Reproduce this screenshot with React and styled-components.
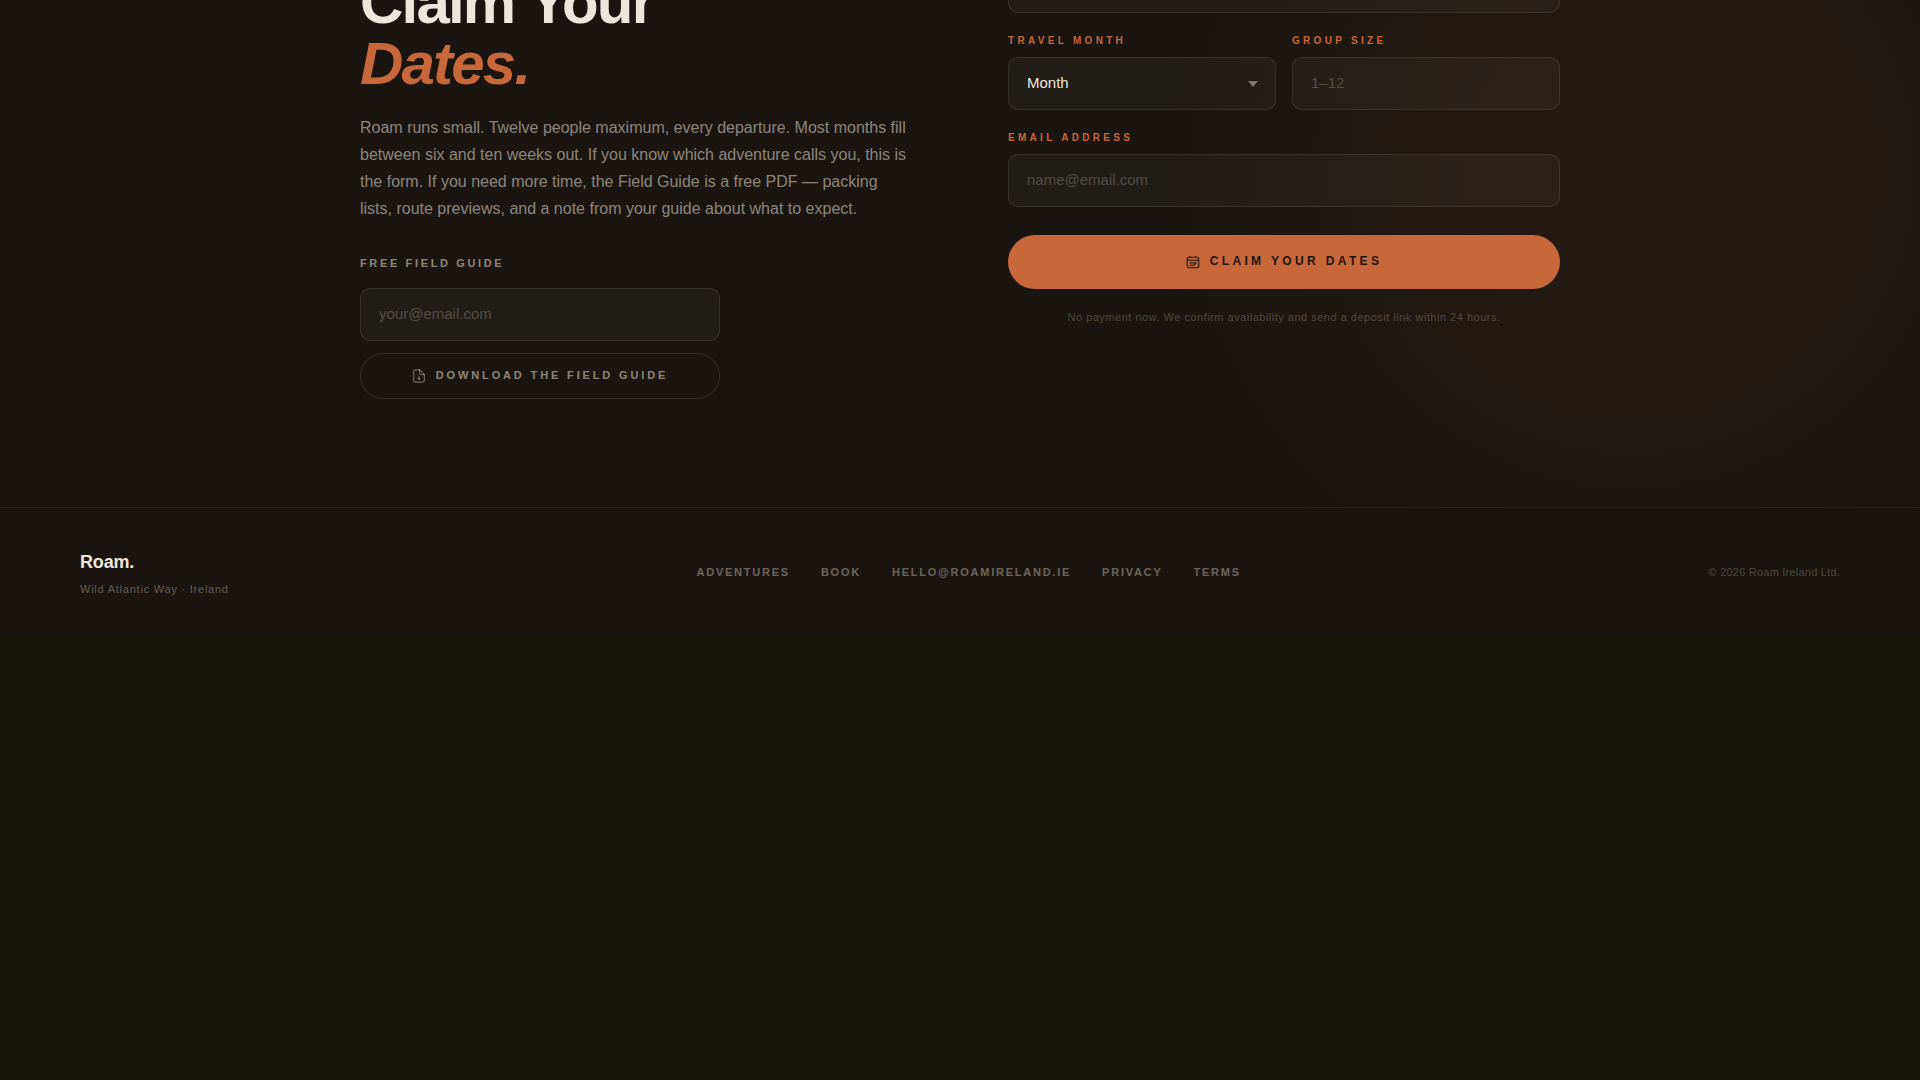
import React from "react";
import styled, { createGlobalStyle, css } from "styled-components";

const c = {
  page: "#171809",
  earth: "#1a1510",
  cream: "#ede6da",
  clay: "#c8673a",
};

const cream = (alpha) => `rgba(237, 230, 218, ${alpha})`;

const GlobalStyle = createGlobalStyle`
  *, *::before, *::after { box-sizing: border-box; }
  body {
    margin: 0;
    background: ${c.page};
    color: ${c.cream};
    font-family: "Liberation Sans", Arial, sans-serif;
  }
  #root { overflow: hidden; }
`;

const Booking = styled.section`
  margin-top: -40px;
  padding: 0 80px 108px;
  background:
    radial-gradient(circle 490px at 85% 210px, rgba(200, 103, 58, 0.07), transparent),
    ${c.earth};
`;

const Columns = styled.div`
  display: grid;
  grid-template-columns: 1fr 1fr;
  gap: 96px;
  max-width: 1200px;
  margin: 0 auto;
`;

const Intro = styled.div`
  padding-top: 12px;
`;

const Title = styled.h2`
  margin: 0 0 20px;
  font-size: 60px;
  line-height: 61px;
  font-weight: 700;
  letter-spacing: -0.03em;

  em {
    display: block;
    color: ${c.clay};
  }
`;

const Lead = styled.p`
  margin: 0 0 34px;
  font-size: 16px;
  line-height: 27px;
  color: ${cream(0.55)};
`;

const GuideForm = styled.form`
  display: flex;
  flex-direction: column;
  gap: 12px;
  max-width: 360px;
`;

const GuideLabel = styled.label`
  margin-bottom: 6px;
  font-size: 11px;
  line-height: 14px;
  font-weight: 700;
  letter-spacing: 0.24em;
  text-transform: uppercase;
  color: ${cream(0.55)};
`;

const control = css`
  width: 100%;
  height: 53px;
  padding: 0 18px 2px;
  border: 1px solid ${cream(0.1)};
  border-radius: 10px;
  background-color: ${cream(0.04)};
  color: ${c.cream};
  font-family: inherit;
  font-size: 15px;
  outline: none;
`;

const Input = styled.input`
  ${control}

  &::placeholder {
    color: ${cream(0.25)};
    opacity: 1;
  }
`;

const SelectBox = styled.div`
  display: grid;
  align-items: center;

  > * { grid-area: 1 / 1; }
  > svg {
    justify-self: end;
    margin-right: 18px;
    pointer-events: none;
  }
`;

const Select = styled.select`
  ${control}
  appearance: none;
`;

const Button = styled.button`
  display: flex;
  align-items: center;
  justify-content: center;
  gap: 10px;
  width: 100%;
  height: ${(p) => (p.$primary ? 54 : 46)}px;
  padding: 0 0 2px;
  border: ${(p) => (p.$primary ? "0" : `1px solid ${cream(0.13)}`)};
  border-radius: 27px;
  background: ${(p) => (p.$primary ? c.clay : "transparent")};
  color: ${(p) => (p.$primary ? c.earth : cream(0.55))};
  font-family: inherit;
  font-size: ${(p) => (p.$primary ? 12 : 11)}px;
  font-weight: 700;
  letter-spacing: ${(p) => (p.$primary ? "0.28em" : "0.26em")};
  text-transform: uppercase;
  cursor: pointer;

  svg { margin-top: 2px; }
`;

const BookingForm = styled.form`
  display: flex;
  flex-direction: column;
  gap: 21px;
`;

const FieldRow = styled.div`
  display: grid;
  grid-template-columns: 1fr 1fr;
  gap: 16px;
`;

const Field = styled.div`
  display: flex;
  flex-direction: column;
  gap: 9px;
`;

const Label = styled.label`
  font-size: 10px;
  line-height: 14px;
  font-weight: 700;
  letter-spacing: 0.33em;
  text-transform: uppercase;
  color: ${c.clay};
`;

const Submit = styled.div`
  margin-top: 7px;
`;

const Note = styled.p`
  margin: 20px 0 0;
  font-size: 11px;
  line-height: 16px;
  letter-spacing: 0.5px;
  text-align: center;
  color: ${cream(0.25)};
`;

const Footer = styled.footer`
  display: flex;
  align-items: center;
  justify-content: space-between;
  padding: 40px 80px;
  border-top: 1px solid ${cream(0.06)};
  background: ${c.earth};
`;

const Brand = styled.div`
  font-size: 18px;
  line-height: 29px;
  font-weight: 700;
  letter-spacing: -0.01em;
`;

const Tagline = styled.p`
  margin: 6px 0 0;
  font-size: 11px;
  line-height: 12px;
  letter-spacing: 0.07em;
  color: ${cream(0.35)};
`;

const FooterNav = styled.nav`
  display: flex;
  gap: 31px;
`;

const FooterLink = styled.a`
  font-size: 11px;
  font-weight: 700;
  letter-spacing: 0.16em;
  text-transform: uppercase;
  text-decoration: none;
  color: ${cream(0.4)};
`;

const Copyright = styled.small`
  font-size: 11px;
  letter-spacing: 0.02em;
  color: ${cream(0.25)};
`;

function CalendarIcon() {
  return (
    <svg width="14" height="14" viewBox="0 0 24 24" fill="none" stroke="currentColor" strokeWidth="1.8" strokeLinecap="round" strokeLinejoin="round" aria-hidden="true">
      <path d="M6 4h12a4 4 0 0 1 4 4v10a4 4 0 0 1-4 4H6a4 4 0 0 1-4-4V8a4 4 0 0 1 4-4zM7 4V2M17 4V2M2.5 9h19" />
      <path d="M7 13.5h4M7 17.5h6M13 13.5h4.5L14 17" />
    </svg>
  );
}

function FileDownloadIcon() {
  return (
    <svg width="14" height="14" viewBox="0 0 24 24" fill="none" stroke="currentColor" strokeWidth="1.6" strokeLinecap="round" strokeLinejoin="round" aria-hidden="true">
      <path d="M13 1.5H6a3 3 0 0 0-3 3v15a3 3 0 0 0 3 3h12a3 3 0 0 0 3-3V9.500zM13 1.500v5a3 3 0 0 0 3 3h5" />
      <path d="M12 12v6M10 16l2 2 2-2" />
    </svg>
  );
}

function Caret() {
  return (
    <svg width="10" height="6" viewBox="0 0 10 6" aria-hidden="true">
      <path d="M0 0h10L5 6z" fill={c.cream} fillOpacity="0.45" />
    </svg>
  );
}

const links = ["Adventures", "Book", "hello@roamireland.ie", "Privacy", "Terms"];

export default function App() {
  return (
    <>
      <GlobalStyle />
      <Booking>
        <Columns>
          <Intro>
            <Title>
              Claim Your <em>Dates.</em>
            </Title>
            <Lead>
              Roam runs small. Twelve people maximum, every departure. Most months fill between six
              and ten weeks out. If you know which adventure calls you, this is the form. If you
              need more time, the Field Guide is a free PDF — packing lists, route previews, and a
              note from your guide about what to expect.
            </Lead>
            <GuideForm onSubmit={(e) => e.preventDefault()}>
              <GuideLabel htmlFor="guide-email">Free Field Guide</GuideLabel>
              <Input id="guide-email" type="email" placeholder="your@email.com" />
              <Button type="submit">
                <FileDownloadIcon />
                Download the Field Guide
              </Button>
            </GuideForm>
          </Intro>

          <BookingForm onSubmit={(e) => e.preventDefault()}>
            <Input type="text" aria-label="Adventure" />
            <FieldRow>
              <Field>
                <Label htmlFor="month">Travel Month</Label>
                <SelectBox>
                  <Select id="month" defaultValue="">
                    <option value="">Month</option>
                  </Select>
                  <Caret />
                </SelectBox>
              </Field>
              <Field>
                <Label htmlFor="group">Group Size</Label>
                <Input id="group" type="text" inputMode="numeric" placeholder="1–12" />
              </Field>
            </FieldRow>
            <Field>
              <Label htmlFor="email">Email Address</Label>
              <Input id="email" type="email" placeholder="name@email.com" />
            </Field>
            <Submit>
              <Button type="submit" $primary>
                <CalendarIcon />
                Claim Your Dates
              </Button>
              <Note>
                No payment now. We confirm availability and send a deposit link within 24 hours.
              </Note>
            </Submit>
          </BookingForm>
        </Columns>
      </Booking>

      <Footer>
        <div>
          <Brand>Roam.</Brand>
          <Tagline>Wild Atlantic Way · Ireland</Tagline>
        </div>
        <FooterNav aria-label="Footer">
          {links.map((text) => (
            <FooterLink key={text} href="#">
              {text}
            </FooterLink>
          ))}
        </FooterNav>
        <Copyright>© 2026 Roam Ireland Ltd.</Copyright>
      </Footer>
    </>
  );
}
